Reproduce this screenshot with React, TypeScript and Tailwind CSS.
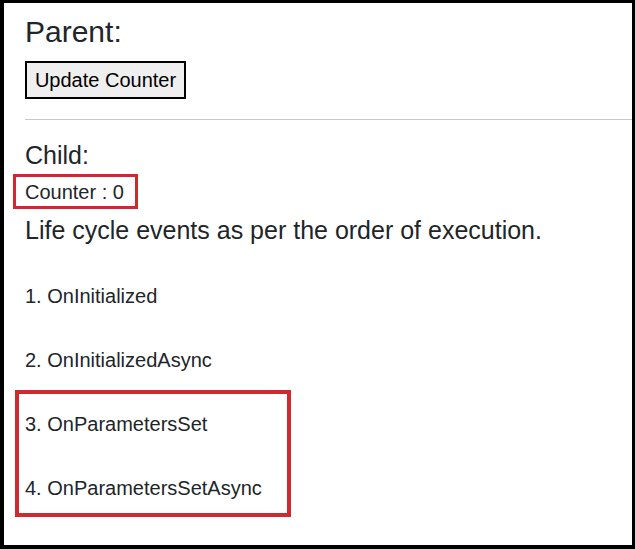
export default function App() {
  return (
    <div
      className="w-[635px] h-[549px] bg-white border-black border-t-[3px] border-l-[4px] border-r-[3px] border-b-[4px] overflow-hidden text-[#212529]"
      style={{ fontFamily: '"Liberation Sans", Arial, sans-serif' }}
    >
      <div className="pl-[21px] pt-[11px]">
        <div className="text-[30px] leading-[36px] font-normal">Parent:</div>
        <button className="mt-[11px] w-[161px] h-[38px] border-2 border-black bg-[#efefef] text-[20px] leading-[24px] text-black flex items-center justify-center">
          Update Counter
        </button>
        <div className="mt-[20px] h-px bg-[#c8c8c8]" />
        <div className="mt-[20px] text-[25px] leading-[30px]">Child:</div>
        <div className="mt-[4px] -ml-[12px] w-[125px] border-[3px] border-[#d0282e] pl-[9px] pt-[3px] pb-[2px] text-[20px] leading-[24px]">
          Counter : 0
        </div>
        <div className="mt-[6px] text-[25px] leading-[30px]">
          Life cycle events as per the order of execution.
        </div>
        <div className="mt-[39px] text-[20px] leading-[24px]">1. OnInitialized</div>
        <div className="mt-[40px] text-[20px] leading-[24px]">2. OnInitializedAsync</div>
        <div className="mt-[18px] -ml-[10px] w-[276px] border-[4px] border-[#d0282e] pl-[6px] pt-[18px] pb-[13px]">
          <div className="text-[20px] leading-[24px]">3. OnParametersSet</div>
          <div className="mt-[40px] text-[20px] leading-[24px]">4. OnParametersSetAsync</div>
        </div>
      </div>
    </div>
  );
}
